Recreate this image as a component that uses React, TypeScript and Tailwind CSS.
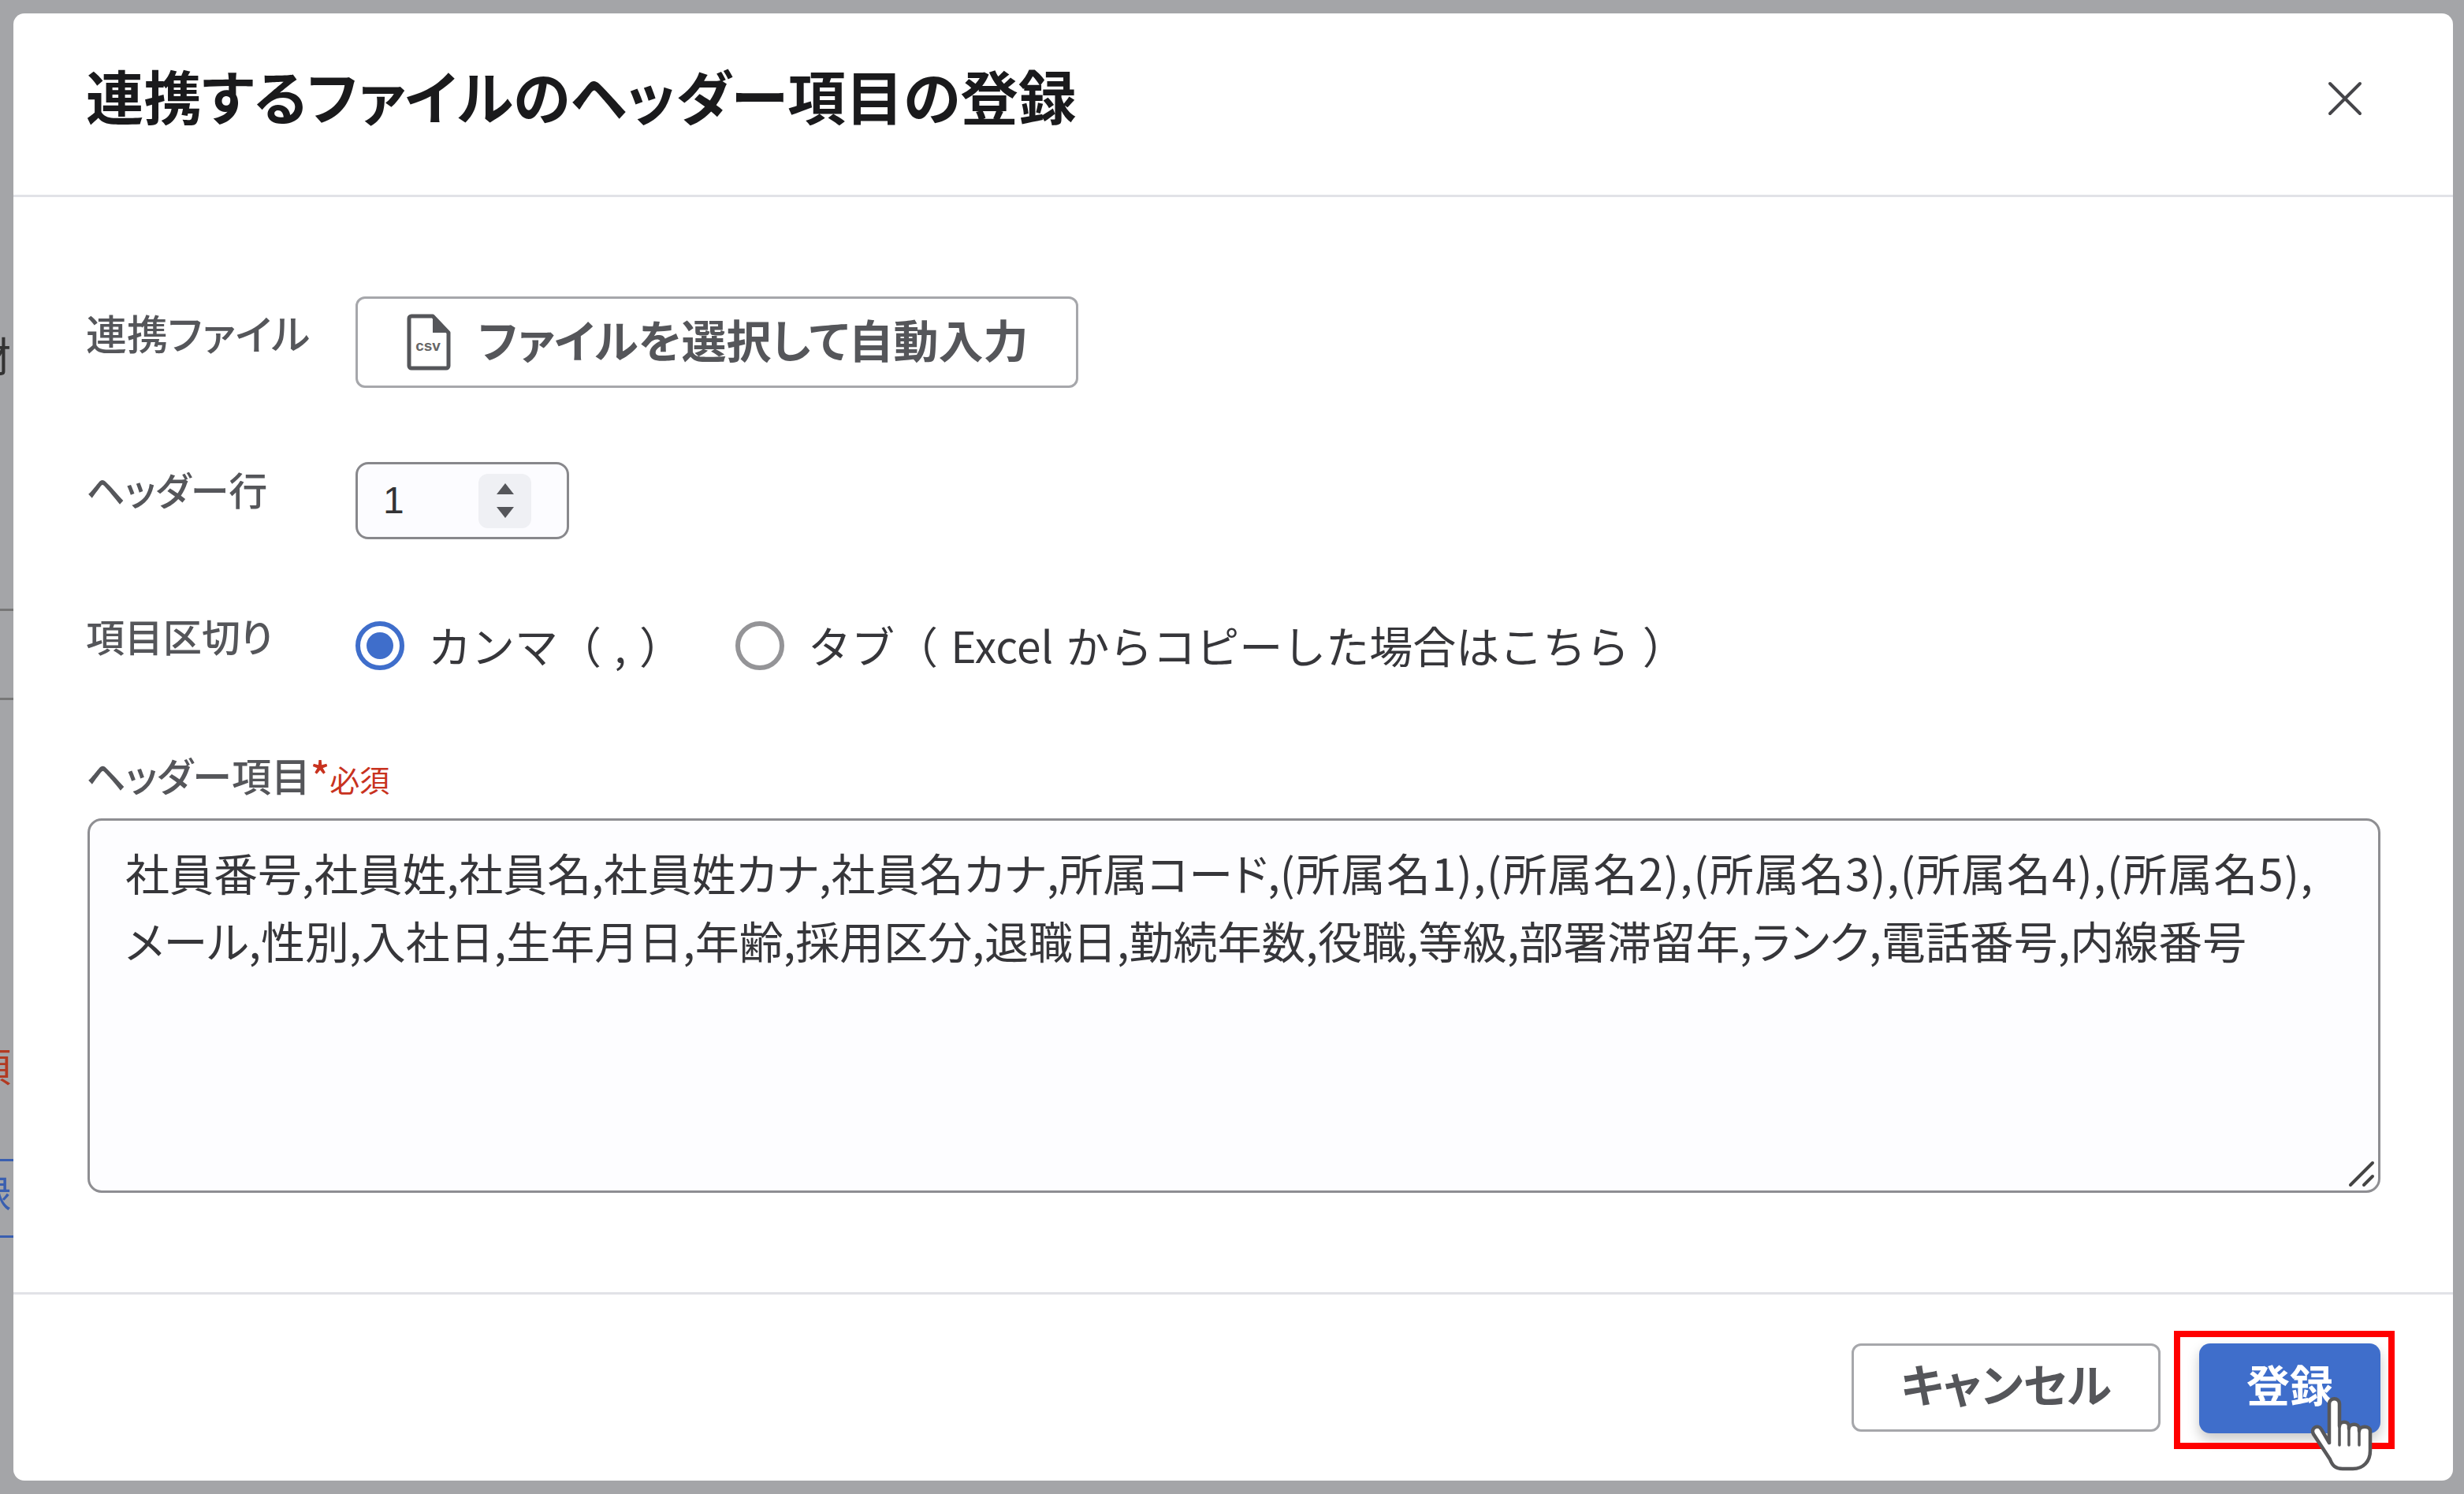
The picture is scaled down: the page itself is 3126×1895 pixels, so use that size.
import React from "react";

const font = "[font-family:'Noto_Sans_CJK_JP','Noto_Sans',sans-serif] [font-feature-settings:'palt']";

function CsvIcon() {
  return (
    <svg width="58" height="72" viewBox="0 0 58 72" className="shrink-0">
      <path d="M5 6a3 3 0 0 1 3-3h27l20 21v42a3 3 0 0 1-3 3H8a3 3 0 0 1-3-3z" fill="#fff" stroke="#55565a" strokeWidth="5" strokeLinejoin="round" />
      <path d="M35 3v21h20z" fill="#55565a" />
      <text x="29" y="47" textAnchor="middle" fontSize="19" fontWeight="700" fill="#666" fontFamily="Liberation Sans">csv</text>
    </svg>
  );
}

function Hand() {
  return (
    <svg width="80" height="94" viewBox="0 0 80 94" className="absolute left-[2931px] top-[1772px]">
      <path
        d="M24 58V9c0-9 13-9 13 0v28c0-7 12-7 12 0v3c0-7 13-7 13 0v3c0-7 14-7 14 0v25c0 14-9 23-22 23H41c-9 0-13-4-16-12L4 47c-4-8 6-13 10-6l10 17"
        fill="#fff"
        stroke="#58585a"
        strokeWidth="4.5"
        strokeLinejoin="round"
        strokeLinecap="round"
      />
      <path d="M37 37v24M49 40v21M62 43v18" stroke="#58585a" strokeWidth="3.5" strokeLinecap="round" fill="none" />
    </svg>
  );
}

function Radio({ checked }: { checked?: boolean }) {
  return (
    <span className={`flex h-[62px] w-[62px] shrink-0 items-center justify-center rounded-full border-[6px] bg-white ${checked ? "border-[#3f6ecb]" : "border-[#949497]"}`}>
      {checked && <span className="h-[34px] w-[34px] rounded-full bg-[#3f6ecb]" />}
    </span>
  );
}

function Label({ children, className = "" }: { children: React.ReactNode; className?: string }) {
  return <div className={`w-[342px] shrink-0 font-medium leading-[68px] text-[#55565a] ${className}`}>{children}</div>;
}

const groups = ["(所属名1),", "(所属名2),", "(所属名3),", "(所属名4),", "(所属名5),"];

export default function App() {
  return (
    <div className={`relative h-[1895px] w-[3126px] overflow-hidden bg-[#a4a5a8] pl-[17px] pr-[14px] pt-[17px] ${font}`}>
      <div className="absolute left-0 top-[420px] text-[52px] leading-[60px] text-[#333] [text-indent:-38px]">材</div>
      <div className="absolute left-0 top-[772px] h-[3px] w-[17px] bg-[#777]" />
      <div className="absolute left-0 top-[885px] h-[3px] w-[17px] bg-[#777]" />
      <div className="absolute left-0 top-[1322px] text-[50px] leading-[56px] text-[#b23a22] [text-indent:-36px]">項</div>
      <div className="absolute left-0 top-[1470px] h-[3px] w-[17px] bg-[#3a5fb0]" />
      <div className="absolute left-0 top-[1484px] text-[50px] leading-[56px] text-[#3a5fb0] [text-indent:-36px]">録</div>
      <div className="absolute left-0 top-[1567px] h-[3px] w-[17px] bg-[#3a5fb0]" />

      <div className="flex h-[1861px] w-[3095px] flex-col rounded-[14px] bg-white">
        <header className="flex h-[233px] shrink-0 items-center justify-between border-b-[3px] border-[#e1e2e7] pl-[92px] pr-[92px]">
          <h1 className="pb-[22px] text-[73.4px] font-bold leading-none text-[#1a1a1c]">連携するファイルのヘッダー項目の登録</h1>
          <div className="mb-[14px] mr-[23px] h-[44px] w-[44px]">
            <svg width="44" height="44" viewBox="0 0 44 44" fill="none" stroke="#454549" strokeWidth="4" strokeLinecap="round">
              <path d="M3 3l38 38M41 3L3 41" />
            </svg>
          </div>
        </header>

        <main className="flex flex-1 flex-col pl-[92px] pr-[92px] pt-[126px]">
          <div className="flex items-start">
            <Label className="pt-[12px] text-[52px]">連携ファイル</Label>
            <button className="flex h-[116px] w-[917px] items-center justify-center gap-[34px] rounded-[12px] border-[3px] border-[#a6a7ab] bg-white text-[57px] font-bold text-[#55565a]">
              <CsvIcon />
              <span className="pb-[8px]">ファイルを選択して自動入力</span>
            </button>
          </div>

          <div className="mt-[94px] flex items-start">
            <Label className="text-[49px]">ヘッダー行</Label>
            <div className="flex h-[98px] w-[271px] items-center justify-between rounded-[16px] border-[3px] border-[#88888c] bg-[#fcfcff] pl-[32px] pr-[45px]">
              <span className="[font-family:'Liberation_Sans',sans-serif] text-[48px] leading-none text-[#333336]">1</span>
              <span className="flex h-[69px] w-[67px] flex-col items-center justify-center gap-[14px] rounded-[12px] bg-[#eff0f4]">
                <svg width="24" height="16" viewBox="0 0 24 16"><path d="M12 1l11 14H1z" fill="#55565a" /></svg>
                <svg width="24" height="16" viewBox="0 0 24 16"><path d="M12 15L1 1h22z" fill="#55565a" /></svg>
              </span>
            </div>
          </div>

          <div className="mt-[88px] flex items-start">
            <Label className="text-[49px]">項目区切り</Label>
            <div className="mt-[14px] flex items-center text-[55px] leading-[62px] text-[#36363a] [font-feature-settings:normal] [word-spacing:4px]">
              <Radio checked />
              <span className="ml-[30px] w-[390px] pb-[4px]">カンマ（ , ）</span>
              <Radio />
              <span className="ml-[30px] pb-[4px]">タブ（ Excel からコピーした場合はこちら ）</span>
            </div>
          </div>

          <div className="mt-[96px] flex items-baseline text-[50px] font-medium leading-[68px] text-[#55565a]">
            <span>ヘッダー項目</span>
            <span className="text-[#c8321e]">*</span>
            <span className="text-[38px] font-normal text-[#c8321e]">必須</span>
          </div>
          <div className="relative ml-[2px] mt-[16px] h-[475px] rounded-[18px] border-[3px] border-[#8e8e92] bg-[#fdfdff] px-[45px] py-[22px] text-[56px] leading-[86px] text-[#36363a]">
            <p className="whitespace-nowrap">
              社員番号,社員姓,社員名,社員姓カナ,社員名カナ,所属コード,
              {groups.map((g) => (
                <span key={g} className="tracking-[1.4px]">{g}</span>
              ))}
            </p>
            <p>メール,性別,入社日,生年月日,年齢,採用区分,退職日,勤続年数,役職,等級,部署滞留年,ランク,電話番号,内線番号</p>
            <svg width="34" height="34" viewBox="0 0 34 34" className="absolute bottom-[4px] right-[4px]" stroke="#444" strokeWidth="4" strokeLinecap="round" fill="none">
              <path d="M3 31L31 3M20 31l11-11" />
            </svg>
          </div>
        </main>

        <footer className="flex h-[239px] shrink-0 items-start justify-end gap-[49px] border-t-[3px] border-[#e1e2e7] pr-[92px] pt-[62px]">
          <button className="flex h-[112px] w-[392px] items-center justify-center rounded-[12px] border-[3px] border-[#a6a7ab] bg-white pb-[12px] text-[58px] font-bold text-[#55565a]">キャンセル</button>
          <button className="flex h-[114px] w-[230px] items-center justify-center rounded-[14px] bg-[#3f6ecb] pb-[14px] text-[55px] font-bold text-white shadow-[0_8px_16px_rgba(0,0,0,0.22)]">登録</button>
        </footer>
      </div>

      <div className="absolute left-[2758px] top-[1688px] h-[150px] w-[280px] border-[8px] border-[#ff0000]" />
      <Hand />
    </div>
  );
}
